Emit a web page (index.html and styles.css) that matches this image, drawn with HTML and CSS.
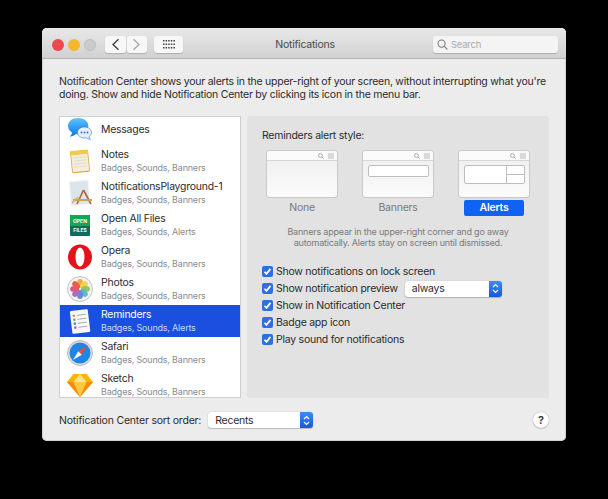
FILE: index.html
```html
<!DOCTYPE html>
<html lang="en">
<head>
<meta charset="utf-8">
<title>Notifications</title>
<link rel="stylesheet" href="styles.css">
</head>
<body>
<main class="window">
  <header class="titlebar">
    <div class="tb-left">
      <span class="light red"></span><span class="light yellow"></span><span class="light gray"></span>
      <div class="navpair">
        <button class="tbtn nav"><svg width="9" height="13" viewBox="0 0 9 13"><path d="M7.5 1.2 2 6.5l5.5 5.3" fill="none" stroke="#444" stroke-width="1.4"/></svg></button>
        <button class="tbtn nav"><svg width="9" height="13" viewBox="0 0 9 13"><path d="M1.5 1.2 7 6.5l-5.5 5.3" fill="none" stroke="#aaa" stroke-width="1.4"/></svg></button>
      </div>
      <button class="tbtn grid"><svg width="12" height="9" viewBox="0 0 12 9" fill="#444"><rect x="0" y="0" width="1.5" height="1.5"/><rect x="2.6" y="0" width="1.5" height="1.5"/><rect x="5.2" y="0" width="1.5" height="1.5"/><rect x="7.8" y="0" width="1.5" height="1.5"/><rect x="10.4" y="0" width="1.5" height="1.5"/><rect x="0" y="3.5" width="1.5" height="1.5"/><rect x="2.6" y="3.5" width="1.5" height="1.5"/><rect x="5.2" y="3.5" width="1.5" height="1.5"/><rect x="7.8" y="3.5" width="1.5" height="1.5"/><rect x="10.4" y="3.5" width="1.5" height="1.5"/><rect x="0" y="7" width="1.5" height="1.5"/><rect x="2.6" y="7" width="1.5" height="1.5"/><rect x="5.2" y="7" width="1.5" height="1.5"/><rect x="7.8" y="7" width="1.5" height="1.5"/><rect x="10.4" y="7" width="1.5" height="1.5"/></svg></button>
    </div>
    <div class="title">Notifications</div>
    <div class="search">
      <svg width="11" height="11" viewBox="0 0 12 12"><circle cx="5" cy="5" r="3.9" fill="none" stroke="#777" stroke-width="1.1"/><path d="M8 8l3.3 3.3" stroke="#777" stroke-width="1.3"/></svg>
      <span>Search</span>
    </div>
  </header>

  <div class="content">
    <p class="intro">Notification Center shows your alerts in the upper-right of your screen, without interrupting what you're<br>doing. Show and hide Notification Center by clicking its icon in the menu bar.</p>

    <div class="columns">
      <ul class="applist">
        <li class="row row-first">
          <svg class="icon" viewBox="0 0 28 28"><defs><linearGradient id="m" x1="0" y1="0" x2="0" y2="1"><stop offset="0" stop-color="#5cc4fb"/><stop offset="1" stop-color="#0d77e8"/></linearGradient></defs><path d="M12 3C6 3 2 6.500 2 11c0 2.800 1.600 5.200 4 6.600-.2 1.500-.9 2.800-2.200 4.100 2.400-.2 4.600-1.100 6.300-2.600.9.200 1.300.3 2.200.3 6 0 10-3.500 10-8.400S18 3 12 3z" fill="url(#m)"/><path d="M18.500 12c-3.900 0-7 2.400-7 5.500s3.100 5.500 7 5.500c.6 0 1.200-.1 1.700-.2 1.100.9 2.500 1.500 4.200 1.600-.8-.8-1.300-1.700-1.500-2.700 1.600-1 2.600-2.500 2.600-4.200 0-3.100-3.100-5.500-7-5.500z" fill="#e9eef6" stroke="#1a7de6" stroke-width=".6"/><circle cx="15.500" cy="17.500" r=".9" fill="#1777de"/><circle cx="18.500" cy="17.500" r=".9" fill="#1777de"/><circle cx="21.500" cy="17.500" r=".9" fill="#1777de"/></svg>
          <div class="rowtext"><div class="name">Messages</div></div>
        </li>
        <li class="row">
          <svg class="icon" viewBox="0 0 28 28"><g transform="rotate(-6 14 14)"><rect x="5" y="3.500" width="18" height="22" rx="1.500" fill="#d9a93c"/><rect x="5.800" y="7" width="16.400" height="17.500" fill="#f3eedd"/><rect x="5" y="3.500" width="18" height="4" rx="1.200" fill="#f4c94e"/><path d="M7.500 10.500h13M7.500 13.500h13M7.500 16.500h13M7.500 19.500h13" stroke="#d9d2bd" stroke-width=".6"/></g></svg>
          <div class="rowtext"><div class="name">Notes</div><div class="sub">Badges, Sounds, Banners</div></div>
        </li>
        <li class="row">
          <svg class="icon" viewBox="0 0 28 28"><g transform="rotate(-5 12 12)"><rect x="4" y="2" width="19" height="24" fill="#dbe6ea" stroke="#f4f6f6" stroke-width="1.200"/></g><path d="M17.500 11 11 25M17.500 11 25 25" stroke="#b0633c" stroke-width="1.600" fill="none"/><path d="M7 21h19" stroke="#c9a557" stroke-width="2.200"/><path d="M6 24l6-6" stroke="#d7b464" stroke-width="1.500"/></svg>
          <div class="rowtext"><div class="name">NotificationsPlayground-1</div><div class="sub">Badges, Sounds, Banners</div></div>
        </li>
        <li class="row">
          <svg class="icon" viewBox="0 0 28 28"><rect x="4" y="4" width="20" height="21" rx="1" fill="#0d6d5c"/><path d="M4 5a1 1 0 0 1 1-1h18a1 1 0 0 1 1 1v10H4z" fill="#11a84e"/><text class="ictext" x="14" y="12.200">OPEN</text><text class="ictext" x="14" y="21">FILES</text></svg>
          <div class="rowtext"><div class="name">Open All Files</div><div class="sub">Badges, Sounds, Alerts</div></div>
        </li>
        <li class="row">
          <svg class="icon" viewBox="0 0 28 28"><ellipse cx="14" cy="14" rx="12" ry="12.500" fill="#e5121c"/><ellipse cx="14" cy="14" rx="4.500" ry="9.500" fill="#fff"/></svg>
          <div class="rowtext"><div class="name">Opera</div><div class="sub">Badges, Sounds, Banners</div></div>
        </li>
        <li class="row">
          <svg class="icon" viewBox="0 0 28 28"><circle cx="14" cy="14" r="12.500" fill="#f2f2f2" stroke="#b5b5b5" stroke-width=".8"/><g opacity=".9"><ellipse cx="14" cy="8.500" rx="3" ry="4.500" fill="#f6a623"/><ellipse cx="14" cy="8.500" rx="3" ry="4.500" fill="#f3d13b" transform="rotate(45 14 14)"/><ellipse cx="14" cy="8.500" rx="3" ry="4.500" fill="#8cc152" transform="rotate(90 14 14)"/><ellipse cx="14" cy="8.500" rx="3" ry="4.500" fill="#4fb6c9" transform="rotate(135 14 14)"/><ellipse cx="14" cy="8.500" rx="3" ry="4.500" fill="#5b7fd1" transform="rotate(180 14 14)"/><ellipse cx="14" cy="8.500" rx="3" ry="4.500" fill="#9b64b8" transform="rotate(225 14 14)"/><ellipse cx="14" cy="8.500" rx="3" ry="4.500" fill="#d9497f" transform="rotate(270 14 14)"/><ellipse cx="14" cy="8.500" rx="3" ry="4.500" fill="#ea4c3c" transform="rotate(315 14 14)"/></g></svg>
          <div class="rowtext"><div class="name">Photos</div><div class="sub">Badges, Sounds, Banners</div></div>
        </li>
        <li class="row selected">
          <svg class="icon" viewBox="0 0 28 28"><g transform="rotate(-7 14 14)"><rect x="5" y="3" width="18" height="23" rx="1.200" fill="#f8f8f8"/><circle cx="8.500" cy="8" r="1.300" fill="#e8863a"/><circle cx="8.500" cy="12" r="1.300" fill="#5ab04c"/><circle cx="8.500" cy="16" r="1.300" fill="#3f8de0"/><circle cx="8.500" cy="20" r="1.300" fill="#a35cc7"/><path d="M11.500 8h9M11.500 12h9M11.500 16h9M11.500 20h9" stroke="#9a9a9a" stroke-width=".8"/></g></svg>
          <div class="rowtext"><div class="name">Reminders</div><div class="sub">Badges, Sounds, Alerts</div></div>
        </li>
        <li class="row">
          <svg class="icon" viewBox="0 0 28 28"><circle cx="14" cy="14" r="12.500" fill="#d9dde2" stroke="#a9adb3" stroke-width=".8"/><circle cx="14" cy="14" r="10.500" fill="#1f86e6"/><path d="M21 7l-8.800 5.300L15.800 15.800z" fill="#f04a3e"/><path d="M7 21l8.800-5.200-3.600-3.500z" fill="#f4f4f4"/></svg>
          <div class="rowtext"><div class="name">Safari</div><div class="sub">Badges, Sounds, Banners</div></div>
        </li>
        <li class="row">
          <svg class="icon" viewBox="0 0 28 28"><path d="M7.500 3h13L27 11 14 26 1 11z" fill="#fdb300"/><path d="M1 11h26L14 26z" fill="#f78a09"/><path d="M7.500 11h13L14 26z" fill="#fdc93f"/><path d="M7.500 11 14 3l6.500 8z" fill="#ffe38a"/></svg>
          <div class="rowtext"><div class="name">Sketch</div><div class="sub">Badges, Sounds, Banners</div></div>
        </li>
      </ul>

      <section class="panel">
        <div class="panel-title">Reminders alert style:</div>
        <div class="styles">
          <div class="style">
            <div class="thumb">
              <div class="thumb-bar"><svg width="16" height="6" viewBox="0 0 16 6"><circle cx="2.500" cy="2.500" r="1.900" fill="none" stroke="#999" stroke-width=".8"/><path d="M4 4l1.600 1.600" stroke="#999" stroke-width=".8"/><path d="M10 1h6M10 3h6M10 5h6" stroke="#aaa" stroke-width=".8"/></svg></div>
            </div>
            <div class="style-label">None</div>
          </div>
          <div class="style">
            <div class="thumb">
              <div class="thumb-bar"><svg width="16" height="6" viewBox="0 0 16 6"><circle cx="2.500" cy="2.500" r="1.900" fill="none" stroke="#999" stroke-width=".8"/><path d="M4 4l1.600 1.600" stroke="#999" stroke-width=".8"/><path d="M10 1h6M10 3h6M10 5h6" stroke="#aaa" stroke-width=".8"/></svg></div>
              <div class="mini-banner"></div>
            </div>
            <div class="style-label">Banners</div>
          </div>
          <div class="style">
            <div class="thumb">
              <div class="thumb-bar"><svg width="16" height="6" viewBox="0 0 16 6"><circle cx="2.500" cy="2.500" r="1.900" fill="none" stroke="#999" stroke-width=".8"/><path d="M4 4l1.600 1.600" stroke="#999" stroke-width=".8"/><path d="M10 1h6M10 3h6M10 5h6" stroke="#aaa" stroke-width=".8"/></svg></div>
              <div class="mini-alert"><div class="mini-alert-main"></div><div class="mini-alert-side"><div></div><div></div></div></div>
            </div>
            <div class="style-label active">Alerts</div>
          </div>
        </div>
        <p class="desc">Banners appear in the upper-right corner and go away<br>automatically. Alerts stay on screen until dismissed.</p>
        <div class="checks">
          <div class="check"><span class="box"><svg width="11" height="11" viewBox="0 0 11 11"><path d="M2.500 5.700l2 2.200 4-5" fill="none" stroke="#fff" stroke-width="1.700"/></svg></span>Show notifications on lock screen</div>
          <div class="check"><span class="box"><svg width="11" height="11" viewBox="0 0 11 11"><path d="M2.500 5.700l2 2.200 4-5" fill="none" stroke="#fff" stroke-width="1.700"/></svg></span>Show notification preview
            <div class="select preview"><span class="select-text">always</span><span class="stepper"><svg width="7" height="11" viewBox="0 0 7 11"><path d="M1 4l2.500-2.500L6 4M1 7l2.500 2.500L6 7" fill="none" stroke="#fff" stroke-width="1.200"/></svg></span></div>
          </div>
          <div class="check"><span class="box"><svg width="11" height="11" viewBox="0 0 11 11"><path d="M2.500 5.700l2 2.200 4-5" fill="none" stroke="#fff" stroke-width="1.700"/></svg></span>Show in Notification Center</div>
          <div class="check"><span class="box"><svg width="11" height="11" viewBox="0 0 11 11"><path d="M2.500 5.700l2 2.200 4-5" fill="none" stroke="#fff" stroke-width="1.700"/></svg></span>Badge app icon</div>
          <div class="check"><span class="box"><svg width="11" height="11" viewBox="0 0 11 11"><path d="M2.500 5.700l2 2.200 4-5" fill="none" stroke="#fff" stroke-width="1.700"/></svg></span>Play sound for notifications</div>
        </div>
      </section>
    </div>

    <footer class="footer">
      <span class="sort-label">Notification Center sort order:</span>
      <div class="select sort"><span class="select-text">Recents</span><span class="stepper"><svg width="7" height="11" viewBox="0 0 7 11"><path d="M1 4l2.500-2.500L6 4M1 7l2.500 2.500L6 7" fill="none" stroke="#fff" stroke-width="1.200"/></svg></span></div>
      <button class="help">?</button>
    </footer>
  </div>
</main>
</body>
</html>
```
FILE: styles.css
```css
* { box-sizing: border-box; }
html, body { margin: 0; padding: 0; }
body {
  width: 608px;
  height: 499px;
  background: #000;
  font-family: Inter, "Liberation Sans", sans-serif;
  font-size: 10.5px;
  letter-spacing: -.25px;
  color: #2b2b2b;
  overflow: hidden;
  padding: 28px 0 0 42px;
}
.window {
  width: 524px;
  height: 413px;
  background: #ececec;
  border-radius: 5px;
  overflow: hidden;
  display: flex;
  flex-direction: column;
  box-shadow: inset 0 0 0 1px #d0d0d0;
}
.titlebar {
  height: 31px;
  flex: none;
  display: grid;
  grid-template-columns: 1fr auto 1fr;
  align-items: center;
  padding: 3px 8px 0 10px;
  background: linear-gradient(#e8e8e8, #d1d1d1);
  border-bottom: 1px solid #b3b3b3;
}
.tb-left { display: flex; align-items: center; }
.light { width: 12px; height: 12px; border-radius: 50%; margin-right: 4px; }
.red { background: #f0464e; }
.yellow { background: #f5b82a; }
.gray { background: #cbcbcb; border: 1px solid #bdbdbd; }
.navpair { display: flex; gap: 1px; margin-left: 5px; }
.tbtn {
  height: 17px;
  padding: 0;
  border: 0;
  border-radius: 3px;
  background: #f7f7f7;
  box-shadow: 0 1px 1px rgba(0,0,0,.18);
  display: flex;
  align-items: center;
  justify-content: center;
}
.nav { width: 20.5px; }
.grid { width: 29px; margin-left: 7px; }
.title { color: #4a4a4a; }
.search {
  justify-self: end;
  width: 125px;
  height: 17px;
  background: #f4f4f4;
  border-radius: 3px;
  box-shadow: 0 1px 1px rgba(0,0,0,.18);
  display: flex;
  align-items: center;
  gap: 3px;
  padding-left: 4px;
  color: #aaa;
  font-size: 9.5px;
}
.content {
  flex: 1;
  display: flex;
  flex-direction: column;
  padding: 0 17px;
  min-height: 0;
}
.intro {
  margin: 16px 0 0;
  line-height: 13px;
  white-space: nowrap;
}
.columns {
  display: flex;
  gap: 6px;
  margin-top: 15px;
  height: 282px;
  flex: none;
}
.applist {
  width: 182px;
  height: 282px;
  margin: 0;
  padding: 0;
  list-style: none;
  background: #fff;
  border: 1px solid #cfcfcf;
  overflow: hidden;
  flex: none;
}
.row {
  height: 32px;
  display: flex;
  align-items: center;
  gap: 7px;
  padding-left: 6px;
}
.row-first { height: 28px; padding-bottom: 4px; }
.icon { width: 28px; height: 28px; flex: none; display: block; }
.ictext { font-size: 5px; font-weight: 700; fill: #fff; text-anchor: middle; font-family: Inter, sans-serif; letter-spacing: 0; }
.rowtext { min-width: 0; }
.name { font-size: 10.4px; line-height: 13px; color: #2b2b2b; letter-spacing: -.2px; }
.sub { font-size: 9px; line-height: 13px; color: #8c8c8c; letter-spacing: -.2px; }
.selected { background: #1b4fe0; }
.selected .name { color: #fff; }
.selected .sub { color: #c9d8fb; }
.panel {
  flex: 1;
  background: #e2e2e2;
  border-radius: 3px;
  padding: 13px 0 0 15px;
}
.panel-title { line-height: 14px; }
.styles {
  display: flex;
  gap: 26px;
  margin: 8px 0 0 5px;
}
.style { width: 70px; display: flex; flex-direction: column; align-items: center; }
.thumb {
  width: 70px;
  height: 46px;
  background: linear-gradient(#eeeeee, #fbfbfb);
  border-radius: 3px;
  box-shadow: 0 0 0 1px #c8c8c8, 0 1px 1px rgba(0,0,0,.1);
}
.thumb-bar {
  height: 10px;
  background: #fbfbfb;
  border-bottom: 1px solid #d6d6d6;
  border-radius: 3px 3px 0 0;
  display: flex;
  justify-content: flex-end;
  align-items: center;
  padding-right: 3px;
}
.mini-banner {
  width: 61px;
  height: 12px;
  margin: 4px auto 0;
  background: #fff;
  border: 1px solid #bdbdbd;
  border-radius: 2px;
}
.mini-alert {
  width: 61px;
  height: 19px;
  margin: 4px auto 0;
  background: #fff;
  border: 1px solid #bdbdbd;
  border-radius: 2px;
  display: flex;
}
.mini-alert-main { flex: 1; border-right: 1px solid #bdbdbd; }
.mini-alert-side { width: 17px; display: flex; flex-direction: column; }
.mini-alert-side div { flex: 1; }
.mini-alert-side div + div { border-top: 1px solid #bdbdbd; }
.style-label {
  margin-top: 3px;
  width: 60px;
  height: 16px;
  line-height: 16px;
  text-align: center;
  color: #7a7a7a;
  border-radius: 2px;
}
.style-label.active { background: #0e63f4; color: #fff; font-weight: 600; }
.desc {
  margin: 10px 0 0;
  width: 272px;
  font-size: 9px;
  line-height: 11px;
  letter-spacing: -.2px;
  text-align: center;
  color: #7a7a7a;
}
.checks { margin-top: 15px; display: flex; flex-direction: column; }
.check { height: 17px; display: flex; align-items: center; }
.box {
  width: 11px;
  height: 11px;
  border-radius: 2px;
  background: #2f6fe0;
  margin-right: 3px;
  flex: none;
  display: flex;
}
.select {
  height: 16px;
  background: #fff;
  border-radius: 3px;
  box-shadow: 0 0 1px rgba(0,0,0,.35), 0 1px 1px rgba(0,0,0,.18);
  display: flex;
  align-items: center;
  justify-content: space-between;
  overflow: hidden;
}
.select-text { padding-left: 7px; }
.stepper {
  width: 13px;
  height: 16px;
  background: linear-gradient(#3f8cf3, #1559d8);
  display: flex;
  align-items: center;
  justify-content: center;
}
.preview { width: 97px; margin-left: 7px; }
.sort { width: 105px; margin-left: 7px; }
.sort-label { letter-spacing: -.2px; }
.footer { display: flex; align-items: center; margin-top: 14px; }
.help {
  width: 16px;
  height: 16px;
  margin-left: auto;
  padding: 0;
  border: 0;
  border-radius: 50%;
  background: #fdfdfd;
  box-shadow: 0 0 1px rgba(0,0,0,.4), 0 1px 1px rgba(0,0,0,.15);
  font: 600 11px Inter, sans-serif;
  color: #333;
}
```
